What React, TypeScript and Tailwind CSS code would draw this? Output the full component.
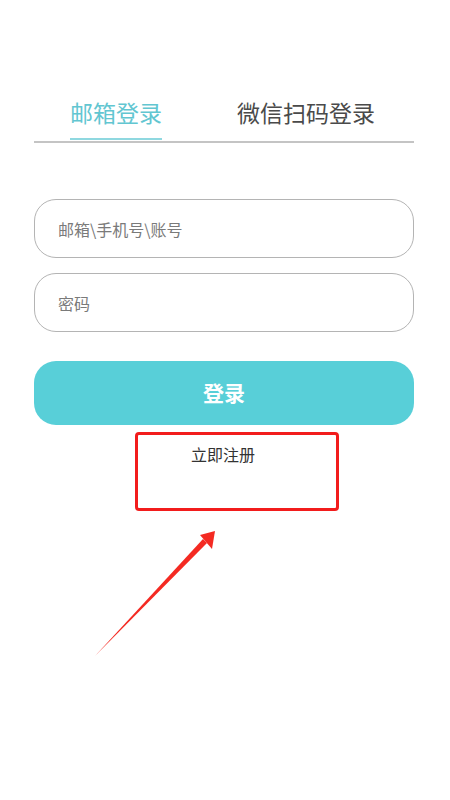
import React from "react";

export default function App() {
  return (
    <div
      className="relative w-[450px] h-[800px] bg-white overflow-hidden"
      style={{ fontFamily: '"Noto Sans CJK SC", "Noto Sans", sans-serif' }}
    >
      <div className="ml-[34px] w-[380px] pt-[94px]">
        {/* Tabs */}
        <div className="relative border-b-2 border-[#c4c4c4]">
          <div className="flex pl-[36px] gap-[75px]">
            <div className="relative pb-[11px]">
              <span className="block text-[23px] leading-[36px] text-[#62c6d1]">邮箱登录</span>
              <div className="absolute left-0 right-0 bottom-[1px] h-[2px] bg-[#8fd8e0]" />
            </div>
            <div className="pb-[11px]">
              <span className="block text-[23px] leading-[36px] text-[#4a4a4a]">微信扫码登录</span>
            </div>
          </div>
        </div>

        {/* Inputs */}
        <div className="mt-[56px] flex flex-col gap-[15px]">
          <div className="h-[59px] rounded-[22px] border border-[#b4b4b4] flex items-center pl-[23px] text-[16px] text-[#7a7a7a]">
            邮箱\手机号\账号
          </div>
          <div className="h-[59px] rounded-[22px] border border-[#b4b4b4] flex items-center pl-[23px] text-[16px] text-[#7a7a7a]">
            密码
          </div>
        </div>

        {/* Button */}
        <div className="mt-[29px] h-[64px] rounded-[22px] bg-[#58cfd8] flex items-center justify-center text-white text-[21px] font-bold">
          登录
        </div>

        {/* Register */}
        <div className="ml-[101px] mt-[7px] w-[204px] h-[79px] border-[3px] border-[#f21c1c] rounded-[4px] pl-[53px] pt-[7px]">
          <span className="text-[16px] leading-[24px] text-[#333]">立即注册</span>
        </div>
      </div>

      {/* Arrow annotation */}
      <svg className="absolute left-0 top-0" width="450" height="800" viewBox="0 0 450 800">
        <polygon points="95,656 207,543 203,539" fill="#f42a22" />
        <polygon points="215,531 200,535 212,549" fill="#f42a22" />
      </svg>
    </div>
  );
}
